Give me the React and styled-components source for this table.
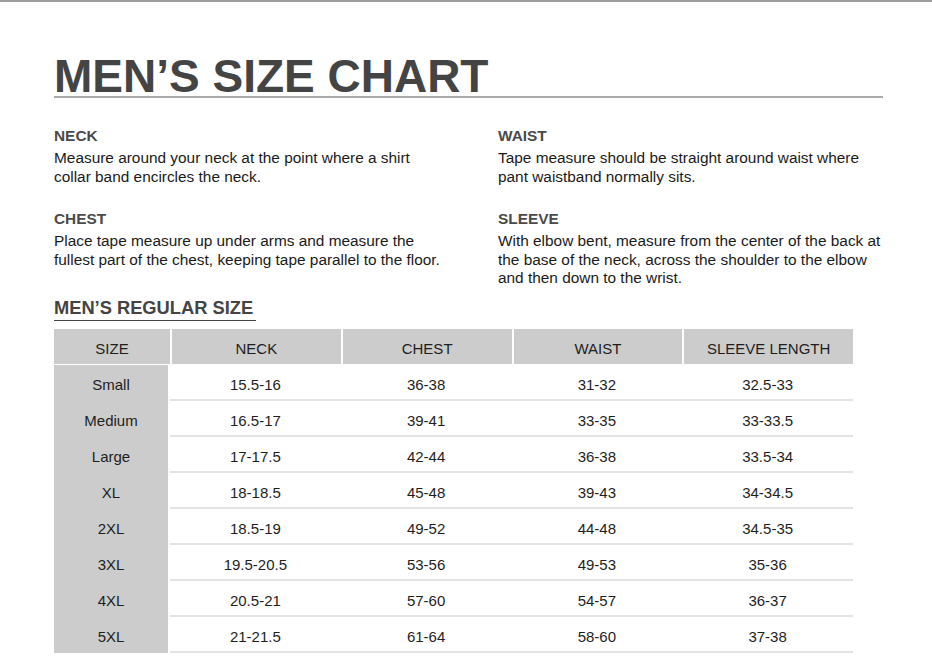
import React from "react";
import styled, { createGlobalStyle } from "styled-components";

const GlobalStyle = createGlobalStyle`
  html, body {
    margin: 0;
    padding: 0;
    background: #fff;
  }
  body {
    font-family: "Liberation Sans", Arial, Helvetica, sans-serif;
    color: #1e1e1e;
  }
`;

const measures = [
  {
    title: "NECK",
    text: "Measure around your neck at the point where a shirt collar band encircles the neck.",
  },
  {
    title: "WAIST",
    text: "Tape measure should be straight around waist where pant waistband normally sits.",
  },
  {
    title: "CHEST",
    text: "Place tape measure up under arms and measure the fullest part of the chest, keeping tape parallel to the floor.",
  },
  {
    title: "SLEEVE",
    text: "With elbow bent, measure from the center of the back at the base of the neck, across the shoulder to the elbow and then down to the wrist.",
  },
];

const columns = ["SIZE", "NECK", "CHEST", "WAIST", "SLEEVE LENGTH"];

const sizes = [
  ["Small", "15.5-16", "36-38", "31-32", "32.5-33"],
  ["Medium", "16.5-17", "39-41", "33-35", "33-33.5"],
  ["Large", "17-17.5", "42-44", "36-38", "33.5-34"],
  ["XL", "18-18.5", "45-48", "39-43", "34-34.5"],
  ["2XL", "18.5-19", "49-52", "44-48", "34.5-35"],
  ["3XL", "19.5-20.5", "53-56", "49-53", "35-36"],
  ["4XL", "20.5-21", "57-60", "54-57", "36-37"],
  ["5XL", "21-21.5", "61-64", "58-60", "37-38"],
];

function App() {
  return (
    <>
      <GlobalStyle />
      <Page>
        <Title>MEN’S SIZE CHART</Title>

        <Guide>
          {measures.map((m) => (
            <Measure key={m.title}>
              <Label>{m.title}</Label>
              <Text>{m.text}</Text>
            </Measure>
          ))}
        </Guide>

        <SubTitle>MEN’S REGULAR SIZE</SubTitle>

        <Table>
          <HeadRow>
            {columns.map((c) => (
              <HeadCell key={c}>{c}</HeadCell>
            ))}
          </HeadRow>
          {sizes.map((row) => (
            <Row key={row[0]}>
              <SizeCell>{row[0]}</SizeCell>
              {row.slice(1).map((v, i) => (
                <Cell key={i}>{v}</Cell>
              ))}
            </Row>
          ))}
        </Table>
      </Page>
    </>
  );
}

export default App;

const Page = styled.div`
  border-top: 2px solid #9d9d9d;
  padding: 54px 49px 0 54px;
  min-height: 667px;
  box-sizing: border-box;
`;

const Title = styled.h1`
  margin: 0;
  font-size: 46px;
  line-height: 40px;
  font-weight: 700;
  color: #444;
  border-bottom: 2px solid #ababab;
`;

const Guide = styled.div`
  display: grid;
  grid-template-columns: 444px 1fr;
  row-gap: 24px;
  margin-top: 29px;
  width: 829px;
`;

const Measure = styled.div`
  display: flex;
  flex-direction: column;
`;

const Label = styled.div`
  font-size: 15.4px;
  line-height: 18px;
  font-weight: 700;
  color: #4a4a4a;
  margin-bottom: 4px;
`;

const Text = styled.p`
  margin: 0;
  font-size: 15.4px;
  line-height: 18.5px;
  color: #1a1a1a;
  max-width: 388px;
`;

const SubTitle = styled.h2`
  display: inline-block;
  margin: 10px 0 0;
  font-size: 18.3px;
  line-height: 20px;
  font-weight: 700;
  color: #444;
  padding: 0 3px 2px 0;
  border-bottom: 1.5px solid #444;
`;

const Table = styled.div`
  margin-top: 8px;
  width: 799px;
`;

const HeadRow = styled.div`
  display: grid;
  grid-template-columns: 116px repeat(4, 1fr);
  column-gap: 2px;
  margin-bottom: 1px;
`;

const HeadCell = styled.div`
  background: #cccccc;
  height: 35px;
  padding-top: 5px;
  box-sizing: border-box;
  text-align: center;
  font-size: 15px;
  line-height: 30px;
  color: #1e1e1e;
`;

const Row = styled.div`
  display: grid;
  grid-template-columns: 116px repeat(4, 1fr);
`;

const SizeCell = styled.div`
  background: #cccccc;
  margin-right: 2px;
  height: 36px;
  padding-top: 5px;
  box-sizing: border-box;
  text-align: center;
  font-size: 15px;
  line-height: 29px;
  color: #1e1e1e;
`;

const Cell = styled.div`
  height: 36px;
  padding-top: 5px;
  box-sizing: border-box;
  border-bottom: 2px solid #e3e3e3;
  text-align: center;
  font-size: 15px;
  line-height: 29px;
  color: #1e1e1e;
`;
